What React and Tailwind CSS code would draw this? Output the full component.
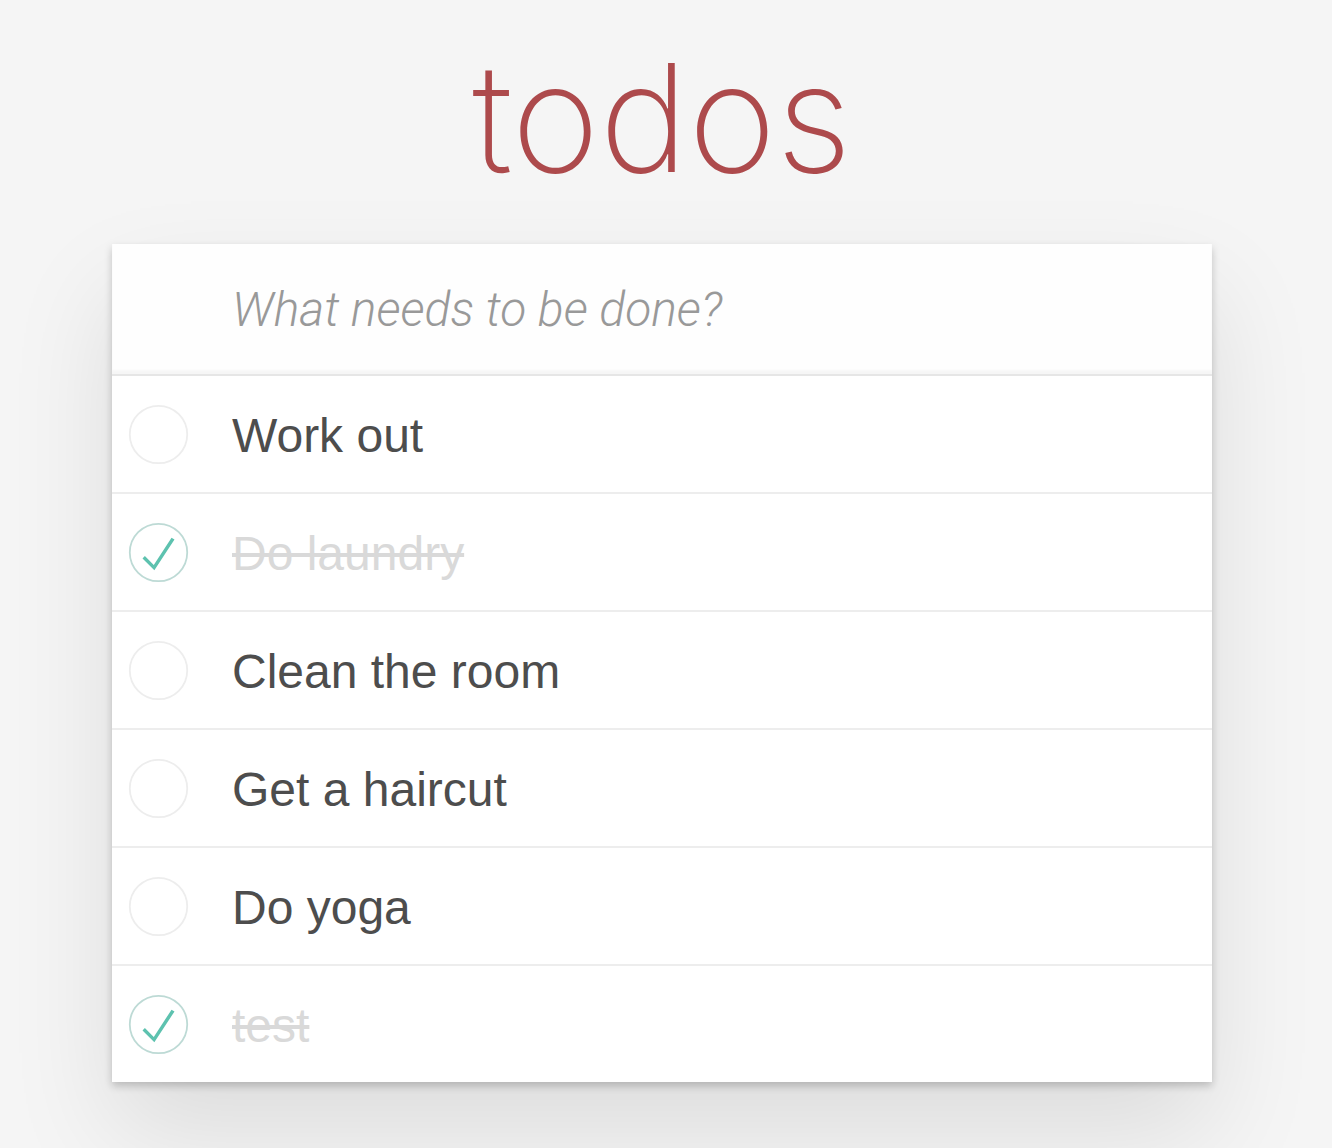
import React from "react";

const todos = [
  { text: "Work out", done: false },
  { text: "Do laundry", done: true },
  { text: "Clean the room", done: false },
  { text: "Get a haircut", done: false },
  { text: "Do yoga", done: false },
  { text: "test", done: true },
];

function Toggle({ done }) {
  return (
    <svg width="61" height="61" viewBox="-1.5 -1.5 103 103" className="block">
      <circle
        cx="50"
        cy="50"
        r="48.5"
        fill="none"
        stroke={done ? "#bddad5" : "#ededed"}
        strokeWidth="3"
      />
      {done && (
        <path fill="#5dc2af" d="M72 25L42 71 27 56l-4 4 20 20 34-52z" />
      )}
    </svg>
  );
}

export default function App() {
  return (
    <div className="min-h-[1148px] bg-[#f5f5f5] pl-[112px] pr-[120px] pt-[43px]">
      <h1
        className="text-center text-[150px] leading-[150px] font-extralight text-[#ad4a4c]"
        style={{ fontFamily: "Inter, 'Liberation Sans', sans-serif" }}
      >
        todos
      </h1>
      <div className="mt-[51px] bg-white shadow-[0_4px_8px_0_rgba(0,0,0,0.2),0_50px_100px_0_rgba(0,0,0,0.1)]">
        <input
          className="block h-[130px] w-full bg-[rgba(0,0,0,0.003)] pl-[120px] pr-8 text-[48px] text-[#4d4d4d] outline-none shadow-[inset_0_-4px_2px_rgba(0,0,0,0.03)] placeholder:italic placeholder:font-light placeholder:text-[#999]"
          style={{ fontFamily: "Roboto, 'Liberation Sans', sans-serif" }}
          placeholder="What needs to be done?"
        />
        <ul className="border-t-2 border-[#e6e6e6]">
          {todos.map((t, i) => (
            <li
              key={i}
              className={
                "flex h-[116px] items-center box-content " +
                (i < todos.length - 1 ? "border-b-2 border-[#ededed]" : "")
              }
            >
              <div className="w-[120px] pl-[16px] flex items-center">
                <Toggle done={t.done} />
              </div>
              <span
                className={
                  "pt-[4px] text-[48px] leading-[58px] " +
                  (t.done ? "text-[#d9d9d9] line-through" : "text-[#4d4d4d]")
                }
                style={{ fontFamily: "'Liberation Sans', Arial, sans-serif" }}
              >
                {t.text}
              </span>
            </li>
          ))}
        </ul>
      </div>
    </div>
  );
}
